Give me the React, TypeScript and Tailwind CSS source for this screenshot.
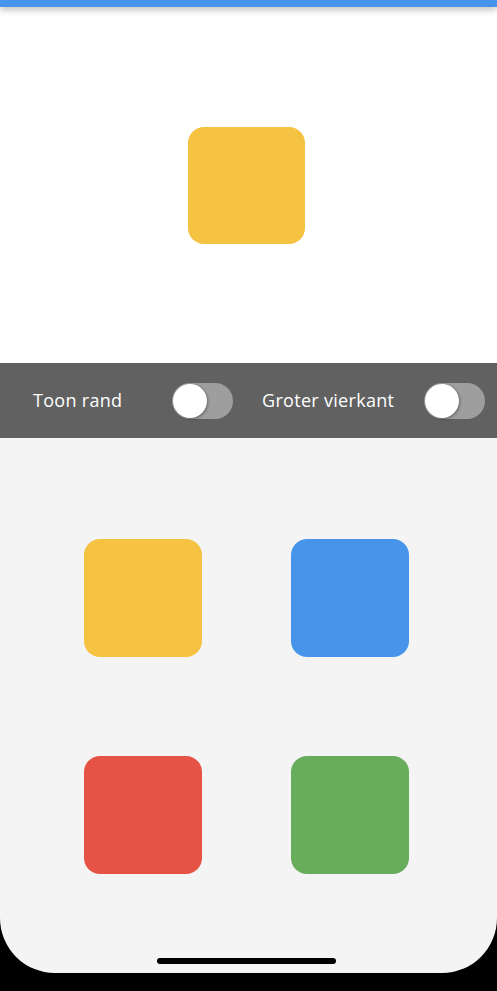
import React, { useState } from 'react';

interface ToggleProps {
  on: boolean;
  onChange: (val: boolean) => void;
}

const Toggle: React.FC<ToggleProps> = ({ on, onChange }) => {
  return (
    <button
      onClick={() => onChange(!on)}
      className={`relative w-[61px] h-[36px] rounded-full shrink-0 ${on ? 'bg-[#4795ea]' : 'bg-[#9e9e9e]'}`}
    >
      <span
        className={`absolute top-[1px] w-[34px] h-[34px] rounded-full bg-white shadow-[1px_1px_3px_rgba(0,0,0,0.35)] ${on ? 'left-[26px]' : 'left-[1px]'}`}
      />
    </button>
  );
};

const Square: React.FC<{ color: string }> = ({ color }) => (
  <div className={`w-[118px] h-[118px] rounded-[16px] ${color}`} />
);

export default function App() {
  const [border, setBorder] = useState(false);
  const [bigger, setBigger] = useState(false);

  return (
    <div className="w-[497px] h-[991px] bg-black overflow-hidden relative" style={{ fontFamily: '"Open Sans", "Noto Sans", sans-serif' }}>
      <div className="h-[973px] bg-[#f4f4f4] rounded-b-[55px] overflow-hidden flex flex-col">
        <div className="h-[7px] bg-[#4795ea] shrink-0 shadow-[0_3px_6px_rgba(0,0,0,0.25)] relative z-10" />
        <div className="h-[356px] bg-white flex items-center justify-center shrink-0 pr-[4px]">
          <div
            className={`rounded-[16px] bg-[#f5c242] ${bigger ? 'w-[160px] h-[160px]' : 'w-[117px] h-[117px]'} ${border ? 'border-4 border-black' : ''}`}
          />
        </div>
        <div className="h-[75px] bg-[#616161] flex items-center shrink-0 text-white text-[18px] tracking-[0.3px]">
          <span className="ml-[33px] w-[139px]">Toon rand</span>
          <Toggle on={border} onChange={setBorder} />
          <span className="ml-[29px] w-[162px]">Groter vierkant</span>
          <Toggle on={bigger} onChange={setBigger} />
        </div>
        <div className="flex-1 grid grid-cols-2 pt-[101px]">
          <div className="flex flex-col items-end pr-[47px] gap-[99px]">
            <Square color="bg-[#f5c242]" />
            <Square color="bg-[#e45344]" />
          </div>
          <div className="flex flex-col items-start pl-[42px] gap-[99px]">
            <Square color="bg-[#4795ea]" />
            <Square color="bg-[#67ad5b]" />
          </div>
        </div>
        <div className="h-[15px] flex justify-center shrink-0 pr-[4px]">
          <div className="w-[179px] h-[6px] rounded-full bg-black" />
        </div>
      </div>
    </div>
  );
}
